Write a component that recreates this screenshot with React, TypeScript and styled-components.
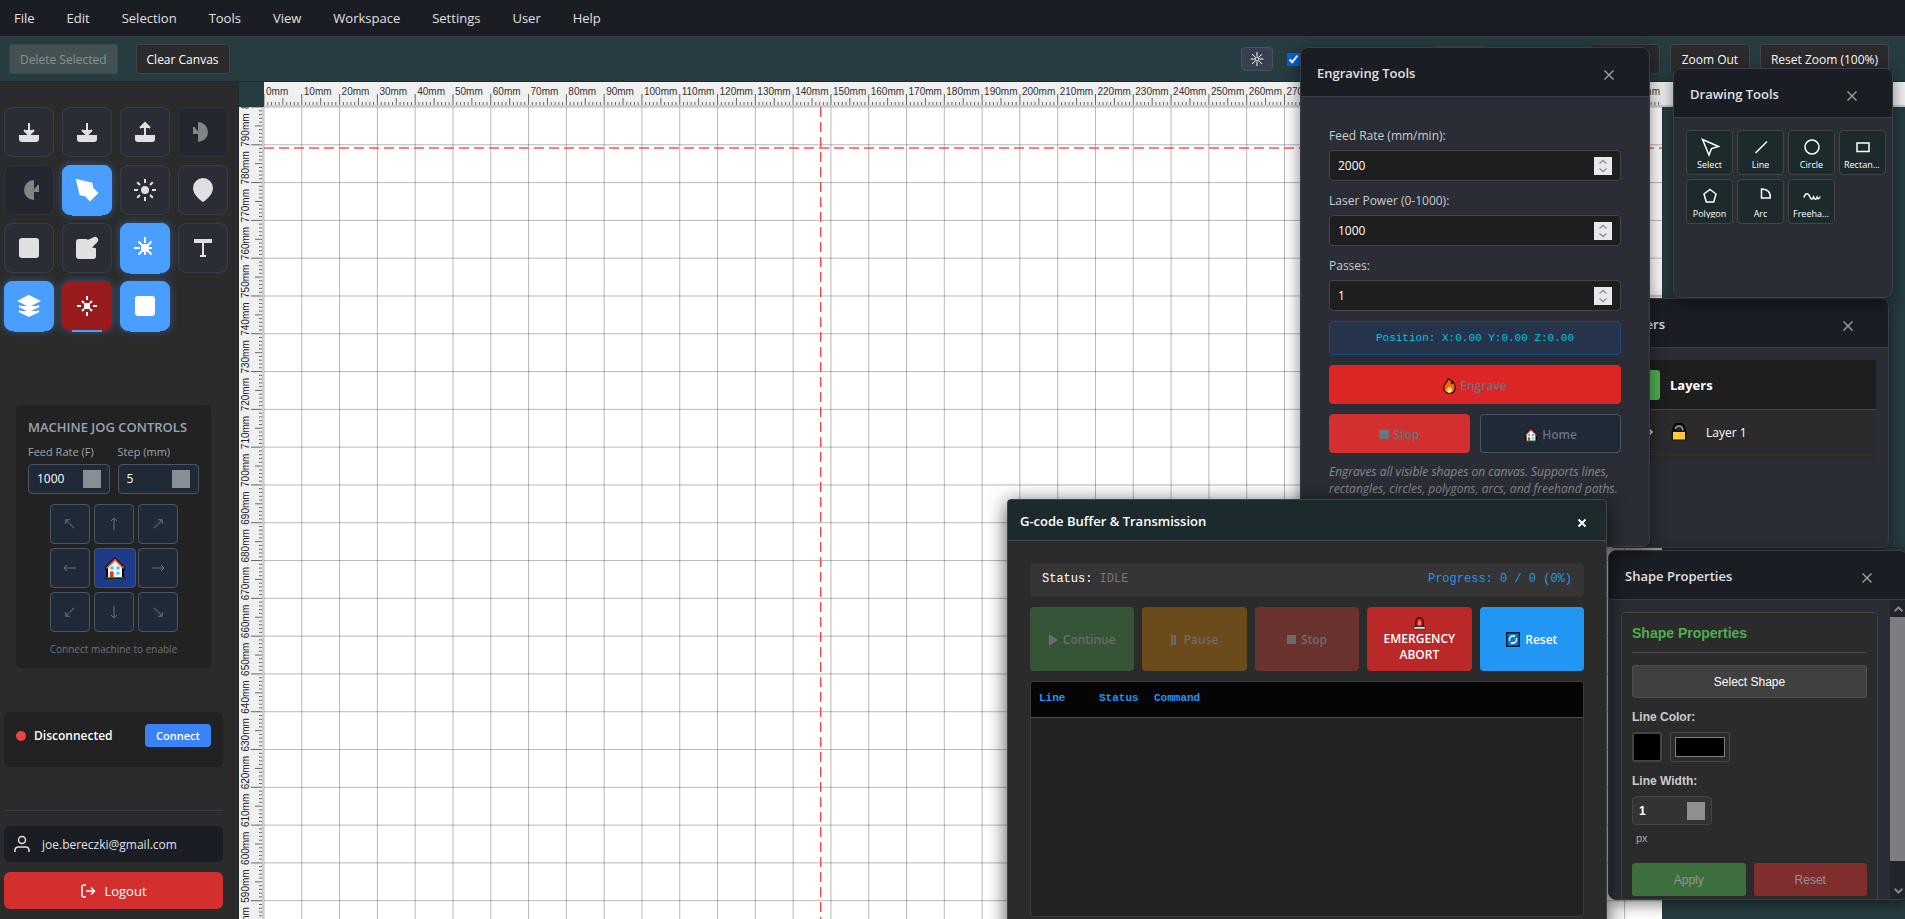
import React from "react";
import styled, { createGlobalStyle, css } from "styled-components";

const ui = '"Open Sans", "Noto Sans", sans-serif';
const arial = '"Liberation Sans", Arial, sans-serif';
const mono = '"Liberation Mono", "Courier New", monospace';

const Global = createGlobalStyle`
  * { box-sizing: border-box; }
  body { margin: 0; background: #263c40; font-family: ${ui}; color: #e0e0e0; font-size: 13px; }
  button, input { font: inherit; color: inherit; margin: 0; }
  input[type="number"] { appearance: textfield; }
  input[type="number"]::-webkit-inner-spin-button { appearance: none; }
`;

/* ---------- frame ---------- */

const Page = styled.div`
  position: relative;
  display: flex;
  flex-direction: column;
  height: 100vh;
  overflow: hidden;
`;

const MenuBar = styled.nav`
  display: flex;
  align-items: center;
  height: 37px;
  padding: 0 1px 1px;
  background: #1b1d25;
  border-bottom: 1px solid #3a3d47;
`;

const MenuItem = styled.button`
  padding: 0 19px 0 13px;
  border: 0;
  background: none;
  font-size: 13px;
  line-height: 20px;
  color: #e0e0e0;
`;

const Toolbar = styled.div`
  display: flex;
  align-items: center;
  height: 45px;
  padding: 0 16px 0 9px;
  background: #263c40;
  border-bottom: 1px solid #1c2a2e;
`;

const ToolbarLeft = styled.div`
  display: flex;
  gap: 18px;
`;

const ToolbarRight = styled.div`
  display: flex;
  align-items: center;
  gap: 10px;
  margin-left: auto;
`;

const ToolbarButton = styled.button<{ $width?: number }>`
  height: 30px;
  min-width: ${(p) => p.$width ?? 0}px;
  padding: 1px 10px 0;
  border: 1px solid #444;
  border-radius: 3px;
  background: #2b2b2b;
  color: #fff;
  font-size: 12px;
  line-height: 18px;
  white-space: nowrap;
  &:disabled {
    background: #445153;
    border-color: #3d4b4e;
    color: #87908f;
  }
`;

const ToolbarIconButton = styled.button`
  display: grid;
  place-items: center;
  width: 32px;
  height: 24px;
  padding: 0;
  border: 1px solid #4a5060;
  border-radius: 4px;
  background: #373f50;
  color: #fff;
`;

const GridOption = styled.label`
  display: flex;
  width: 139px;
  padding-left: 4px;
  input {
    width: 13px;
    height: 13px;
    accent-color: #0060df;
  }
`;

const GridSize = styled.input`
  width: 56px;
  height: 26px;
  margin-right: 92px;
  border: 1px solid #444;
  border-radius: 3px;
  background: #2b2b2b;
`;

const Main = styled.div`
  display: flex;
  flex: 1;
  min-height: 0;
`;

/* ---------- sidebar ---------- */

const Sidebar = styled.aside`
  display: flex;
  flex-direction: column;
  flex: none;
  width: 239px;
  padding: 25px 15px 10px 4px;
  background: #2b2b2b;
  border-right: 1px solid #1c2a2e;
`;

const IconGrid = styled.div`
  display: grid;
  grid-template-columns: repeat(4, 50px);
  grid-auto-rows: 50px;
  gap: 8px;
`;

const IconButton = styled.button<{ $tone?: "blue" | "red" }>`
  position: relative;
  display: grid;
  place-items: center;
  padding: 0;
  border: 1px solid #3a3d47;
  border-radius: 8px;
  background: #2a2d36;
  color: #e0e0e0;
  svg {
    width: 24px;
    height: 24px;
    fill: currentColor;
    stroke: currentColor;
    stroke-width: 2;
  }
  &:disabled {
    background: #232730;
    border-color: #2f333c;
    color: #848484;
  }
  ${(p) =>
    p.$tone &&
    css`
      background: ${p.$tone === "blue" ? "#4a9eff" : "#991b1b"};
      border-color: ${p.$tone === "blue" ? "#4a9eff" : "#991b1b"};
      color: #fff;
      box-shadow: 0 0 8px rgba(74, 158, 255, 0.4);
      &::after {
        content: "";
        position: absolute;
        left: 9px;
        bottom: -2px;
        width: 30px;
        height: 2px;
        background: #4a9eff;
      }
    `}
`;

const JogPanel = styled.section`
  display: flex;
  flex-direction: column;
  height: 263px;
  margin: 74px 12px 0;
  padding: 12px;
  border-radius: 6px;
  background: #222;
`;

const JogTitle = styled.h2`
  margin: 0;
  font-size: 13px;
  line-height: 20px;
  font-weight: 600;
  color: #9ca3af;
`;

const JogFields = styled.div`
  display: grid;
  grid-template-columns: 1fr 1fr;
  gap: 8px;
  margin-top: 7px;
`;

const JogField = styled.label`
  display: flex;
  flex-direction: column;
  gap: 4px;
  font-size: 11px;
  line-height: 16px;
  color: #9ca3af;
`;

const NumberBox = styled.span<{ $height: number; $bg: string; $line: string }>`
  display: flex;
  align-items: center;
  height: ${(p) => p.$height}px;
  padding: 0 8px;
  border: 1px solid ${(p) => p.$line};
  border-radius: 4px;
  background: ${(p) => p.$bg};
  input {
    flex: 1;
    width: 0;
    min-width: 0;
    padding: 0;
    border: 0;
    outline: 0;
    background: transparent;
    color: #fff;
    font-size: 12px;
    line-height: 18px;
  }
`;

const Spin = styled.span<{ $bg: string }>`
  display: grid;
  place-items: center;
  flex: none;
  width: 18px;
  height: 18px;
  background: ${(p) => p.$bg};
`;

const JogGrid = styled.div`
  display: grid;
  grid-template-columns: repeat(3, 40px);
  grid-auto-rows: 40px;
  gap: 4px;
  align-self: center;
  margin: 10px 0 8px;
`;

const JogButton = styled.button<{ $home?: boolean }>`
  display: grid;
  place-items: center;
  width: ${(p) => (p.$home ? 42 : 40)}px;
  padding: 0;
  border: 1px solid #4b5563;
  border-radius: 4px;
  background: ${(p) => (p.$home ? "#1e3a8a" : "#1f2937")};
  color: #6b7280;
`;

const JogNote = styled.p`
  margin: 0;
  text-align: center;
  font-size: 10px;
  line-height: 18px;
  color: #6b7280;
`;

const Connection = styled.section`
  display: flex;
  align-items: flex-start;
  height: 55px;
  margin-top: 44px;
  padding: 12px;
  border-radius: 6px;
  background: #222;
`;

const Dot = styled.span`
  width: 10px;
  height: 10px;
  margin: 7px 8px 0 0;
  border-radius: 50%;
  background: #ef4444;
`;

const ConnectionState = styled.strong`
  flex: 1;
  font-size: 12px;
  line-height: 24px;
  font-weight: 600;
  color: #fff;
`;

const ConnectButton = styled.button`
  width: 66px;
  height: 23px;
  padding: 0;
  border: 0;
  border-radius: 4px;
  background: #3b82f6;
  color: #fff;
  font-size: 11px;
  font-weight: 600;
`;

const Account = styled.div`
  display: flex;
  flex-direction: column;
  gap: 10px;
  margin-top: auto;
  padding-top: 15px;
  border-top: 1px solid #3a3d47;
`;

const UserRow = styled.div`
  display: flex;
  align-items: center;
  gap: 12px;
  height: 36px;
  padding: 0 10px;
  border-radius: 6px;
  background: #1b1d25;
  font-size: 12px;
  color: #e0e0e0;
`;

const LogoutButton = styled.button`
  display: flex;
  align-items: center;
  justify-content: center;
  gap: 8px;
  height: 37px;
  border: 0;
  border-radius: 6px;
  background: #d32f2f;
  color: #fff;
  font-size: 13px;
`;

/* ---------- canvas ---------- */

const Workspace = styled.main`
  display: grid;
  grid-template: 25px minmax(0, 1fr) / 25px minmax(0, 1fr);
  flex: 1;
  min-width: 0;
  background: #263c40;
`;

const TopRuler = styled.div`
  overflow: hidden;
  background: #f0f0f0;
  border-bottom: 2px solid #ccc;
`;

const SideRuler = styled.div`
  overflow: hidden;
  background: #f0f0f0;
  border-right: 2px solid #ccc;
`;

const CanvasClip = styled.div`
  overflow: hidden;
`;

const Drawing = styled.svg`
  display: block;
  font-family: ${arial};
  font-size: 10px;
`;

/* ---------- windows ---------- */

const Window = styled.section<{
  $top: number;
  $right: number;
  $width: number;
  $height?: number;
  $z: number;
  $dark?: boolean;
}>`
  position: absolute;
  z-index: ${(p) => p.$z};
  top: ${(p) => p.$top}px;
  right: ${(p) => p.$right}px;
  display: flex;
  flex-direction: column;
  width: ${(p) => p.$width}px;
  height: ${(p) => (p.$height ? p.$height + "px" : "auto")};
  overflow: hidden;
  border: 1px solid ${(p) => (p.$dark ? "#444" : "#3a3d47")};
  border-radius: ${(p) => (p.$dark ? 4 : 8)}px;
  background: ${(p) => (p.$dark ? "#2b2b2b" : "#2a2d36")};
  box-shadow: ${(p) => (p.$dark ? "0 4px 20px rgba(0,0,0,.7)" : "0 4px 16px rgba(0,0,0,.5)")};
`;

const TitleBar = styled.header<{ $dark?: boolean; $pad: number }>`
  display: flex;
  align-items: center;
  justify-content: space-between;
  flex: none;
  height: ${(p) => (p.$dark ? 41 : 49)}px;
  padding: 2px ${(p) => p.$pad}px 0 ${(p) => (p.$dark ? 12 : 16)}px;
  border-bottom: 1px solid ${(p) => (p.$dark ? "#444" : "#3a3d47")};
  background: ${(p) => (p.$dark ? "#1c2a2e" : "#1b1d25")};
  h2 {
    margin: 0;
    font-size: 13px;
    line-height: 20px;
    font-weight: 600;
    color: ${(p) => (p.$dark ? "#fff" : "#e0e0e0")};
  }
`;

const CloseButton = styled.button<{ $dark?: boolean }>`
  display: grid;
  padding: 4px 0 0;
  border: 0;
  background: none;
  color: ${(p) => (p.$dark ? "#fff" : "#a0a0a0")};
`;

const EngraveBody = styled.div`
  display: flex;
  flex-direction: column;
  gap: 10px;
  padding: 29px 28px;
`;

const Field = styled.label`
  display: flex;
  flex-direction: column;
  gap: 5px;
  font-size: 12px;
  line-height: 19px;
  color: #ccc;
`;

const Position = styled.output`
  height: 34px;
  border: 1px solid #1a4a80;
  border-radius: 4px;
  background: #25344a;
  color: #06c2e0;
  font-family: ${mono};
  font-size: 11px;
  line-height: 33px;
  text-align: center;
`;

const ActionRow = styled.div`
  display: grid;
  grid-template-columns: 1fr 1fr;
  gap: 10px;
`;

const ActionButton = styled.button<{ $bg: string; $line?: string }>`
  display: flex;
  align-items: center;
  justify-content: center;
  gap: 4px;
  height: 39px;
  padding: 2px 0 0;
  border: 1px solid ${(p) => p.$line ?? p.$bg};
  border-radius: 4px;
  background: ${(p) => p.$bg};
  color: #6b7280;
  font-size: 12px;
  font-weight: 600;
`;

const Hint = styled.p`
  margin: 0;
  font-size: 12px;
  line-height: 17px;
  font-style: italic;
  color: #888;
`;

const ToolGrid = styled.div`
  display: grid;
  grid-template-columns: repeat(4, 47px);
  grid-auto-rows: 45px;
  gap: 4px;
  padding: 12px;
`;

const ToolButton = styled.button`
  display: flex;
  flex-direction: column;
  align-items: center;
  padding: 6px 4px 0;
  border: 1px solid #444;
  border-radius: 4px;
  background: #1c2a2e;
  color: #fff;
  svg {
    flex: none;
  }
  span {
    max-width: 100%;
    overflow: hidden;
    text-overflow: ellipsis;
    white-space: nowrap;
    font-size: 9px;
    line-height: 9px;
    margin-top: 3px;
  }
`;

const LayerBox = styled.div`
  margin: 12px;
  padding-bottom: 5px;
  background: #2b2b2b;
`;

const LayerHead = styled.div`
  display: flex;
  align-items: center;
  gap: 10px;
  height: 50px;
  padding: 0 10px;
  border-bottom: 1px solid #444;
  background: #1e1e1e;
  h3 {
    margin: 0;
    font-size: 13px;
    font-weight: 700;
    color: #fff;
  }
`;

const AddLayer = styled.button`
  width: 30px;
  height: 30px;
  padding: 0;
  border: 0;
  border-radius: 3px;
  background: #4caf50;
  color: #fff;
`;

const LayerRow = styled.div`
  display: flex;
  align-items: center;
  height: 45px;
  padding-left: 15px;
  border-bottom: 1px solid #333;
  font-size: 12px;
  color: #fff;
  svg + svg {
    margin: 0 19px 0 18px;
  }
`;

const ScrollBody = styled.div`
  display: flex;
  flex: 1;
  min-height: 0;
`;

const ScrollTrack = styled.div`
  display: flex;
  flex-direction: column;
  align-items: center;
  justify-content: space-between;
  width: 17px;
  background: #22242c;
`;

const ScrollThumb = styled.div`
  width: 17px;
  height: 244px;
  margin-bottom: 21px;
  background: #7c7d82;
`;

const ScrollArrow = styled.span`
  display: grid;
  place-items: center;
  width: 17px;
  height: 17px;
`;

const PropsCard = styled.div`
  display: flex;
  flex-direction: column;
  flex: 1;
  height: 310px;
  margin: 12px 12px 0;
  padding: 10px;
  border: 1px solid #444;
  border-radius: 4px;
  background: #2b2b2b;
  font-family: ${arial};
  h3 {
    margin: 0 0 12px;
    padding-bottom: 8px;
    border-bottom: 1px solid #4a4a4a;
    font-size: 14px;
    line-height: 21px;
    color: #4caf50;
  }
`;

const SelectShape = styled.button`
  height: 33px;
  border: 1px solid #505050;
  border-radius: 3px;
  background: #404040;
  color: #fff;
  font-size: 12px;
`;

const PropLabel = styled.label`
  margin: 12px 0 8px;
  font-size: 12px;
  line-height: 14px;
  font-weight: 700;
  color: #ccc;
`;

const PropRow = styled.div`
  display: flex;
  gap: 8px;
`;

const Swatch = styled.span`
  width: 30px;
  height: 30px;
  border: 2px solid #444;
  border-radius: 3px;
  background: #000;
`;

const ColorInput = styled.input`
  width: 60px;
  height: 30px;
  padding: 4px;
  border: 1px solid #484848;
  border-radius: 3px;
  background: #2b2b2b;
  &::-webkit-color-swatch-wrapper {
    padding: 0;
  }
  &::-webkit-color-swatch {
    border: 1px solid #808080;
    border-radius: 0;
  }
`;

const WidthBox = styled.div`
  width: 80px;
  > span {
    padding: 0 6px;
  }
  input {
    font-weight: 700;
  }
`;

const Unit = styled.span`
  margin: 6px 0 18px 4px;
  font-size: 11px;
  line-height: 14px;
  color: #aaa;
`;

const PropAction = styled.button<{ $bg: string }>`
  flex: 1;
  height: 33px;
  border: 0;
  border-radius: 3px;
  background: ${(p) => p.$bg};
  color: #939393;
  font-size: 12px;
`;

const BufferBody = styled.div`
  display: flex;
  flex-direction: column;
  gap: 10px;
  padding: 22px;
`;

const StatusBar = styled.div`
  display: flex;
  justify-content: space-between;
  height: 34px;
  padding: 0 12px;
  border-radius: 4px;
  background: #353535;
  font-family: ${mono};
  font-size: 12px;
  line-height: 33px;
  color: #fff;
`;

const Tint = styled.span<{ $color: string }>`
  color: ${(p) => p.$color};
`;

const CommandRow = styled.div`
  display: grid;
  grid-template-columns: repeat(5, 1fr);
  gap: 8px;
`;

const CommandButton = styled.button<{ $bg: string; $stack?: boolean }>`
  display: flex;
  flex-direction: ${(p) => (p.$stack ? "column" : "row")};
  align-items: center;
  justify-content: center;
  gap: ${(p) => (p.$stack ? 1 : 5)}px;
  height: 64px;
  padding: 1px 8px 0;
  border: 0;
  border-radius: 4px;
  background: ${(p) => p.$bg};
  color: #fff;
  font-size: 12px;
  line-height: 16px;
  font-weight: 600;
  &:disabled {
    color: #6c6c6c;
  }
`;

const BufferBox = styled.div`
  height: 236px;
  border: 1px solid #3c3c3c;
  border-radius: 4px;
  background: #222;
  overflow: hidden;
`;

const BufferTable = styled.table`
  width: 100%;
  table-layout: fixed;
  border-collapse: collapse;
  font-family: ${mono};
  font-size: 11px;
  th {
    height: 35px;
    padding: 0 0 3px 8px;
    border-bottom: 1px solid #505050;
    background: #050505;
    color: #2196f3;
    text-align: left;
  }
`;

/* ---------- icons ---------- */

const S: React.FC<{ children: React.ReactNode }> = ({ children }) => (
  <svg viewBox="0 0 24 24" aria-hidden="true">
    {children}
  </svg>
);

const tray = "M21 15v4a2 2 0 0 1-2 2H5a2 2 0 0 1-2-2v-4";
const squareIcon = <rect x="3" y="3" width="18" height="18" rx="2" />;

type SideTool = { name: string; tone?: "blue" | "red"; disabled?: boolean; art: React.ReactNode };

const sideTools: SideTool[] = [
  { name: "Import", art: <path d={tray + "M7 10l5 5 5-5M12 15V3"} /> },
  { name: "Save", art: <path d={tray + "M7 10l5 5 5-5M12 15V3"} /> },
  { name: "Export", art: <path d={tray + "M17 8l-5-5-5 5M12 3v12"} /> },
  { name: "Undo", disabled: true, art: <path d="M3 7v6h6M7 3a9 9 0 0 1 0 18" /> },
  { name: "Redo", disabled: true, art: <path d="M21 7v6h-6M17 3a9 9 0 0 0 0 18" /> },
  {
    name: "Drawing tools",
    tone: "blue",
    art: <path d="M12 19l7-7 3 3-7 7-3-3zM18 13l-1.500-7.500L2 2l3.500 14.500L13 18l5-5z" />,
  },
  {
    name: "Laser",
    art: (
      <>
        <circle cx="12" cy="12" r="3" />
        <path d="M12 1v4M12 19v4M1 12h4M19 12h4M4.200 4.200L7 7M17 17l2.800 2.800M4.200 19.800L7 17M17 7l2.800-2.800" />
      </>
    ),
  },
  { name: "Origin", art: <path d="M21 10c0 7-9 13-9 13s-9-6-9-13a9 9 0 0 1 18 0z" /> },
  { name: "Frame", art: squareIcon },
  {
    name: "Edit",
    art: (
      <path d="M20 13v7a2 2 0 0 1-2 2H4a2 2 0 0 1-2-2V6a2 2 0 0 1 2-2h7l2 1 5.500-2.500a2.120 2.120 0 0 1 3 3L15 12z" />
    ),
  },
  {
    name: "Engraving tools",
    tone: "blue",
    art: (
      <>
        <circle cx="12" cy="12" r="3" />
        <path d="M12 1v6M1 12h6M12 16v3M16 12h3M5.500 5.500l4 4M14.500 14.500l4 4M18.500 5.500l-4 4M9.500 14.500l-4 4" />
      </>
    ),
  },
  { name: "Text", art: <path d="M4 7V4h16v3M9 20h6M12 4v16" /> },
  {
    name: "Layers",
    tone: "blue",
    art: <path d="M12 2L2 7l10 5 10-5-10-5zM2 17l10 5 10-5M2 12l10 5 10-5" />,
  },
  {
    name: "Fire",
    tone: "red",
    art: (
      <>
        <rect x="10" y="10" width="4" height="4" />
        <path d="M12 2v4M12 18v4M2 12h4M18 12h4M7 7l2 2M15 15l2 2M17 7l-2 2M9 15l-2 2" />
      </>
    ),
  },
  { name: "Shape properties", tone: "blue", art: squareIcon },
];

const House = ({ size }: { size: number }) => (
  <svg width={size} height={size} viewBox="0 0 22 22" aria-hidden="true">
    <path d="M11 0L1 10v3h1v7h-1v2h20v-2h-1v-7h1v-3z" fill="#000" />
    <path d="M11 3.500L4 10.500V20h14v-9.500z" fill="#f4f4f4" />
    <path d="M2 11.500l9-9 9 9" fill="none" stroke="#e8532b" strokeWidth="1.600" />
    <path d="M6.500 9.500h3v3h-3zM12.500 9.500h3v3h-3zM12.500 15h3v2.500h-3z" fill="#37c6f4" />
    <path d="M6 14.500h3.500V20H6z" fill="#d83b1f" />
    <path d="M2 20h18v1.300H2z" fill="#16a016" />
  </svg>
);

const Flame = () => (
  <svg width="13" height="16" viewBox="0 0 13 16" aria-hidden="true">
    <path
      d="M5 .8c2.500.6 3.800 2.500 3.600 4.600.8-.3 1.100-1 1.200-1.700 1.700 1.900 2.500 4.300 2.300 6.400-.3 3.200-2.600 5.200-5.700 5.200S.9 13.200.8 10.200c-.1-2.300 1-4 2.200-5.300C4.200 3.600 5 2.500 5 .8z"
      fill="#f7630c"
      stroke="#221000"
      strokeWidth="1.200"
    />
    <path d="M6.500 7.500c.4 2 3 2.600 3 4.700 0 1.500-1.200 2.500-2.900 2.500s-3.100-1-3.100-2.700c0-1.900 2.300-2.400 3-4.500z" fill="#ffd42a" />
    <path d="M6.500 11.500c1 .8 1.500 1.300 1.400 2.100-.1.700-.6 1-1.400 1s-1.400-.4-1.400-1.100c0-.8.6-1.200 1.400-2z" fill="#fff6b8" />
  </svg>
);

const Padlock = () => (
  <svg width="16" height="18" viewBox="0 0 16 18" aria-hidden="true">
    <path d="M3.500 9V6a4.500 4.500 0 0 1 9 0v3" fill="none" stroke="#000" strokeWidth="4" />
    <path d="M4.200 6a3.900 3.900 0 0 1 7.600 0v3" fill="none" stroke="#a5a5a5" strokeWidth="1.500" />
    <path d="M.5 7.500h15v10H.5z" fill="#111" />
    <path d="M2 9h12v7.500H2z" fill="#ffc83d" />
  </svg>
);

const Siren = () => (
  <svg width="13" height="13" viewBox="0 0 13 13" aria-hidden="true">
    <path d="M2.500 9L3 4q.5-3.400 3.500-3.400T10 4l.5 5z" fill="#e81224" stroke="#1b0000" strokeWidth="1.100" />
    <path d="M5 8.500V4.500q1.500-2 3 0v4z" fill="#ff7a5c" />
    <path d="M.8 9.500h11.400v2.800H.8z" fill="#d8d8d8" stroke="#222" strokeWidth=".8" />
  </svg>
);

const ResetGlyph = () => (
  <svg width="14" height="15" viewBox="0 0 14 15" aria-hidden="true">
    <path d="M.7.7h12.600v13.600H.7z" fill="#0078d7" stroke="#04162a" strokeWidth="1.400" />
    <path d="M3.500 9V6.500L5.500 4h3M10.500 6v2.500l-2 2.500h-3" fill="none" stroke="#fff" strokeWidth="1.300" />
    <path d="M7.500 2.500L9.500 4l-2 1.500zM6.500 9.500L4.500 11l2 1.500z" fill="#fff" />
  </svg>
);

const Arrow = ({ angle }: { angle: number }) => (
  <svg width="16" height="16" viewBox="-8 -8 16 16" fill="none" stroke="currentColor" aria-hidden="true">
    <path d="M-6 0H6M3 -3L6 0L3 3" transform={`rotate(${angle})`} />
  </svg>
);

const Cross = ({ bold }: { bold?: boolean }) => (
  <svg width="10" height="10" viewBox="0 0 10 10" stroke="currentColor" strokeWidth={bold ? 2 : 1.400} aria-hidden="true">
    <path d={bold ? "M1.500 1.500l7 7M8.500 1.500l-7 7" : "M.5.5l9 9M9.500.5l-9 9"} />
  </svg>
);

const SpinArrows = () => (
  <svg width="10" height="14" viewBox="0 0 10 14" fill="none" stroke="#8f8f9d" strokeWidth="1.400" aria-hidden="true">
    <path d="M1.500 4.500L5 1.500l3.500 3M1.500 9.500L5 12.500l3.500-3" />
  </svg>
);

const Chevron = ({ up }: { up?: boolean }) => (
  <svg width="9" height="6" viewBox="0 0 9 6" fill="none" stroke="#85868b" strokeWidth="2" aria-hidden="true">
    <path d={up ? "M.7 5.200L4.500 1.400l3.800 3.800" : "M.7.8l3.800 3.800L8.300.8"} />
  </svg>
);

const drawTools: [string, React.ReactNode][] = [
  ["Select", <path d="M2.500 2.500l16 7-7 2-2.500 6.500z" />],
  ["Line", <path d="M4.500 16L16 4.500" />],
  ["Circle", <circle cx="10" cy="10" r="7" />],
  ["Rectangle", <rect x="4" y="6" width="12" height="8.500" />],
  ["Polygon", <path d="M10 3.500l6 4.500-2.300 8H6.300L4 8z" />],
  ["Arc", <path d="M10.500 3v9h9q0-9-9-9z" />],
  ["Freehand", <path d="M2 11.500c1-4.500 4-5 5.500-1.500s2.500 4.500 4 1c1 3 2.500 3 3.500 .500.500 2 2 1.500 3-1" />],
];

const jogAngles: [string, number][] = [
  ["Up left", 225],
  ["Up", 270],
  ["Up right", 315],
  ["Left", 180],
  ["Home", NaN],
  ["Right", 0],
  ["Down left", 135],
  ["Down", 90],
  ["Down right", 45],
];

/* ---------- rulers and grid ---------- */

const PX_PER_MM = 96 / 25.4;
const BED_W = 370;
const BED_H = 800;
const HEADER_H = 107;
const range = (n: number) => Array.from({ length: n }, (_, i) => i);
const tickSize = (mm: number) => (mm % 10 === 0 ? 11 : mm % 5 === 0 ? 7 : 3);

/** Number of millimetres of the bed that fit below the header. */
const useVisibleMm = () => {
  const measure = () => Math.min(BED_H, Math.ceil((window.innerHeight - HEADER_H) / PX_PER_MM));
  const [mm, setMm] = React.useState(measure);
  React.useEffect(() => {
    const onResize = () => setMm(measure());
    window.addEventListener("resize", onResize);
    return () => window.removeEventListener("resize", onResize);
  }, []);
  return mm;
};

const HorizontalRuler = () => (
  <Drawing width={1400} height={23}>
    {range(BED_W).map((mm) => {
      const x = mm * PX_PER_MM;
      return <path key={mm} d={`M${x} 23V${23 - tickSize(mm)}`} stroke="#666" />;
    })}
    {range(BED_W / 10).map((i) => (
      <text key={i} x={i * 10 * PX_PER_MM + 2} y={13} fill="#333">
        {i * 10}mm
      </text>
    ))}
  </Drawing>
);

const VerticalRuler = () => {
  const visible = useVisibleMm();
  return (
    <Drawing width={23} height={visible * PX_PER_MM}>
      {range(visible).map((mm) => {
        const y = mm * PX_PER_MM;
        return <path key={mm} d={`M23 ${y}H${23 - tickSize(mm)}`} stroke="#666" />;
      })}
      {range(Math.floor(visible / 10) + 2).map((i) => (
        <text key={i} transform={`translate(10 ${i * 10 * PX_PER_MM + 2}) rotate(-90)`} fill="#222">
          {BED_H - i * 10}mm
        </text>
      ))}
    </Drawing>
  );
};

const Bed = () => {
  const w = BED_W * PX_PER_MM;
  const h = BED_H * PX_PER_MM;
  return (
    <Drawing width={w} height={h}>
      <rect width={w} height={h} fill="#fff" />
      <g stroke="#000" strokeOpacity=".28">
        {range(BED_W / 10 + 1).map((i) => (
          <path key={i} d={`M${i * 10 * PX_PER_MM} 0V${h}`} />
        ))}
        {range(BED_H / 10 + 1).map((i) => (
          <path key={i} d={`M0 ${i * 10 * PX_PER_MM}H${w}`} />
        ))}
      </g>
      <path d={`M0 41H${w}`} stroke="#ff4444" strokeOpacity=".7" strokeWidth="2" strokeDasharray="10 5" />
      <path d={`M556.700 0V${h}`} stroke="#ff4444" strokeWidth="1.400" strokeDasharray="10 5" />
    </Drawing>
  );
};

/* ---------- windows ---------- */

const Title: React.FC<{ text: string; pad: number; dark?: boolean }> = ({ text, pad, dark }) => (
  <TitleBar $dark={dark} $pad={pad}>
    <h2>{text}</h2>
    <CloseButton $dark={dark} aria-label={`Close ${text}`}>
      <Cross bold={dark} />
    </CloseButton>
  </TitleBar>
);

const EngraveWindow = () => (
  <Window $top={47} $right={255} $width={350} $height={500} $z={4}>
    <Title text="Engraving Tools" pad={35} />
    <EngraveBody>
      {[
        ["Feed Rate (mm/min):", "2000"],
        ["Laser Power (0-1000):", "1000"],
        ["Passes:", "1"],
      ].map(([label, value]) => (
        <Field key={label}>
          {label}
          <NumberBox $height={31} $bg="#1e1e1e" $line="#444">
            <input type="number" defaultValue={value} />
            <Spin $bg="#e9e9ed">
              <SpinArrows />
            </Spin>
          </NumberBox>
        </Field>
      ))}
      <Position>Position: X:0.00 Y:0.00 Z:0.00</Position>
      <ActionButton $bg="#dc2626" disabled>
        <Flame /> Engrave
      </ActionButton>
      <ActionRow>
        <ActionButton $bg="#d32f2f" disabled>
          <svg width="10" height="9" aria-hidden="true">
            <rect width="10" height="9" fill="#6b7280" />
          </svg>
          Stop
        </ActionButton>
        <ActionButton $bg="#1f2937" $line="#4b5563" disabled>
          <House size={14} /> Home
        </ActionButton>
      </ActionRow>
      <Hint>Engraves all visible shapes on canvas. Supports lines, rectangles, circles, polygons, arcs, and freehand paths.</Hint>
    </EngraveBody>
  </Window>
);

const DrawingWindow = () => (
  <Window $top={68} $right={12} $width={220} $height={230} $z={3}>
    <Title text="Drawing Tools" pad={35} />
    <ToolGrid>
      {drawTools.map(([name, art]) => (
        <ToolButton key={name}>
          <svg width="20" height="20" viewBox="0 0 20 20" fill="none" stroke="currentColor" strokeWidth="1.500" aria-hidden="true">
            {art}
          </svg>
          <span>{name}</span>
        </ToolButton>
      ))}
    </ToolGrid>
  </Window>
);

const LayersWindow = () => (
  <Window $top={298} $right={16} $width={282} $height={250} $z={2}>
    <Title text="Layers" pad={35} />
    <LayerBox>
      <LayerHead>
        <AddLayer aria-label="Add layer">+</AddLayer>
        <h3>Layers</h3>
      </LayerHead>
      <LayerRow>
        <svg width="18" height="12" viewBox="0 0 18 12" fill="none" stroke="#e0e0e0" strokeWidth="1.500" aria-hidden="true">
          <path d="M1 6q8-9 16 0-8 9-16 0z" />
          <circle cx="9" cy="6" r="2" />
        </svg>
        <Padlock />
        Layer 1
      </LayerRow>
    </LayerBox>
  </Window>
);

const ShapeWindow = () => (
  <Window $top={550} $right={-3} $width={300} $height={350} $z={3}>
    <Title text="Shape Properties" pad={35} />
    <ScrollBody>
      <PropsCard>
        <h3>Shape Properties</h3>
        <SelectShape>Select Shape</SelectShape>
        <PropLabel htmlFor="line-color">Line Color:</PropLabel>
        <PropRow>
          <Swatch />
          <ColorInput id="line-color" type="color" defaultValue="#000000" />
        </PropRow>
        <PropLabel htmlFor="line-width">Line Width:</PropLabel>
        <WidthBox>
          <NumberBox $height={29} $bg="#333" $line="#444">
            <input id="line-width" type="number" defaultValue="1" />
            <Spin $bg="#8f8f91" />
          </NumberBox>
        </WidthBox>
        <Unit>px</Unit>
        <PropRow>
          <PropAction $bg="#3c6e3e" disabled>
            Apply
          </PropAction>
          <PropAction $bg="#7f2d2d" disabled>
            Reset
          </PropAction>
        </PropRow>
      </PropsCard>
      <ScrollTrack>
        <ScrollArrow>
          <Chevron up />
        </ScrollArrow>
        <ScrollThumb />
        <ScrollArrow>
          <Chevron />
        </ScrollArrow>
      </ScrollTrack>
    </ScrollBody>
  </Window>
);

const BufferWindow = () => (
  <Window $top={499} $right={298} $width={600} $z={5} $dark>
    <Title text="G-code Buffer &amp; Transmission" pad={19} dark />
    <BufferBody>
      <StatusBar>
        <span>
          Status: <Tint $color="#757575">IDLE</Tint>
        </span>
        <Tint $color="#2196f3">Progress: 0 / 0 (0%)</Tint>
      </StatusBar>
      <CommandRow>
        <CommandButton $bg="#355536" disabled>
          <svg width="9" height="12" aria-hidden="true">
            <path d="M0 0l9 6-9 6z" fill="#6c6c6c" />
          </svg>
          Continue
        </CommandButton>
        <CommandButton $bg="#6b4a1b" disabled>
          <svg width="8" height="10" aria-hidden="true">
            <path d="M0 0h2v10H0zM3 0h2v10H3z" fill="#6c6c6c" />
          </svg>
          Pause
        </CommandButton>
        <CommandButton $bg="#69322f" disabled>
          <svg width="9" height="9" aria-hidden="true">
            <rect width="9" height="9" fill="#6c6c6c" />
          </svg>
          Stop
        </CommandButton>
        <CommandButton $bg="#bb2828" $stack>
          <Siren />
          EMERGENCY ABORT
        </CommandButton>
        <CommandButton $bg="#2196f3">
          <ResetGlyph />
          Reset
        </CommandButton>
      </CommandRow>
      <BufferBox>
        <BufferTable>
          <colgroup>
            <col width="60" />
            <col width="55" />
            <col />
          </colgroup>
          <thead>
            <tr>
              <th>Line</th>
              <th>Status</th>
              <th>Command</th>
            </tr>
          </thead>
        </BufferTable>
      </BufferBox>
    </BufferBody>
  </Window>
);

/* ---------- page ---------- */

const menus = ["File", "Edit", "Selection", "Tools", "View", "Workspace", "Settings", "User", "Help"];

export default function App() {
  return (
    <Page>
      <Global />
      <MenuBar>
        {menus.map((m) => (
          <MenuItem key={m}>{m}</MenuItem>
        ))}
      </MenuBar>
      <Toolbar>
        <ToolbarLeft>
          <ToolbarButton disabled>Delete Selected</ToolbarButton>
          <ToolbarButton>Clear Canvas</ToolbarButton>
        </ToolbarLeft>
        <ToolbarRight>
          <ToolbarIconButton aria-label="Snap">
            <svg width="16" height="16" viewBox="0 0 16 16" fill="none" stroke="currentColor" aria-hidden="true">
              <circle cx="8" cy="8" r="2" />
              <path d="M8 1v4M8 11v4M1.500 8h4M10.500 8h4M3 3l3 3M13 3l-3 3M3 13l3-3M13 13l-3-3" />
            </svg>
          </ToolbarIconButton>
          <GridOption>
            <input type="checkbox" defaultChecked aria-label="Show grid" />
          </GridOption>
          <GridSize type="number" aria-label="Grid size" />
          <ToolbarButton $width={70}>Zoom In</ToolbarButton>
          <ToolbarButton $width={80}>Zoom Out</ToolbarButton>
          <ToolbarButton $width={129}>Reset Zoom (100%)</ToolbarButton>
        </ToolbarRight>
      </Toolbar>
      <Main>
        <Sidebar>
          <IconGrid>
            {sideTools.map((t) => (
              <IconButton key={t.name} aria-label={t.name} $tone={t.tone} disabled={t.disabled}>
                <S>{t.art}</S>
              </IconButton>
            ))}
          </IconGrid>
          <JogPanel>
            <JogTitle>MACHINE JOG CONTROLS</JogTitle>
            <JogFields>
              {[
                ["Feed Rate (F)", "1000"],
                ["Step (mm)", "5"],
              ].map(([label, value]) => (
                <JogField key={label}>
                  {label}
                  <NumberBox $height={30} $bg="#1f2937" $line="#4b5563">
                    <input type="number" defaultValue={value} />
                    <Spin $bg="#898d94" />
                  </NumberBox>
                </JogField>
              ))}
            </JogFields>
            <JogGrid>
              {jogAngles.map(([name, angle]) => (
                <JogButton key={name} aria-label={name} $home={name === "Home"} disabled>
                  {name === "Home" ? <House size={22} /> : <Arrow angle={angle} />}
                </JogButton>
              ))}
            </JogGrid>
            <JogNote>Connect machine to enable</JogNote>
          </JogPanel>
          <Connection>
            <Dot />
            <ConnectionState>Disconnected</ConnectionState>
            <ConnectButton>Connect</ConnectButton>
          </Connection>
          <Account>
            <UserRow>
              <svg width="16" height="18" viewBox="0 0 16 18" fill="none" stroke="currentColor" strokeWidth="1.500" aria-hidden="true">
                <circle cx="8" cy="5" r="3.500" />
                <path d="M1 17v-1.500q0-3.500 3.500-3.500h7q3.500 0 3.500 3.500V17" />
              </svg>
              joe.bereczki@gmail.com
            </UserRow>
            <LogoutButton>
              <svg width="16" height="16" viewBox="0 0 16 16" fill="none" stroke="currentColor" strokeWidth="1.500" aria-hidden="true">
                <path d="M6 2H4q-2 0-2 2v8q0 2 2 2h2M6 8h8M11 4.500L14.500 8 11 11.500" />
              </svg>
              Logout
            </LogoutButton>
          </Account>
        </Sidebar>
        <Workspace>
          <span />
          <TopRuler>
            <HorizontalRuler />
          </TopRuler>
          <SideRuler>
            <VerticalRuler />
          </SideRuler>
          <CanvasClip>
            <Bed />
          </CanvasClip>
        </Workspace>
      </Main>
      <LayersWindow />
      <ShapeWindow />
      <DrawingWindow />
      <EngraveWindow />
      <BufferWindow />
    </Page>
  );
}
